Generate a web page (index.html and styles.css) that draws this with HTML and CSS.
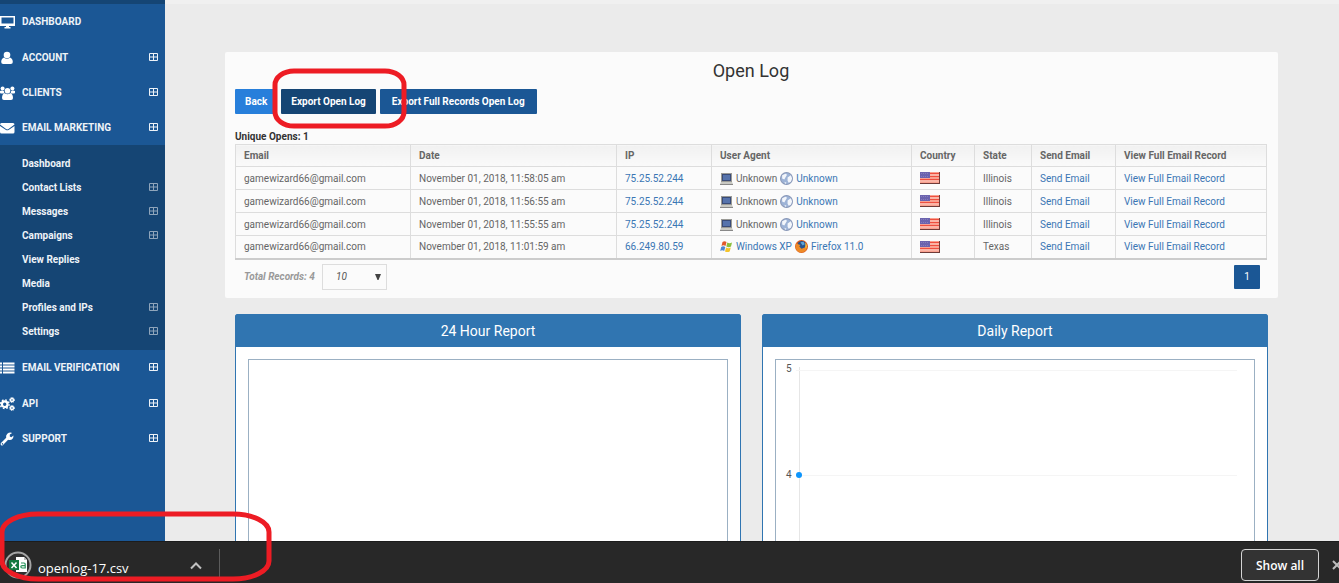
FILE: index.html
```html
<!DOCTYPE html>
<html lang="en">
<head>
<meta charset="utf-8">
<title>Open Log</title>
<link rel="stylesheet" href="styles.css">
</head>
<body>
<svg class="defs" aria-hidden="true">
  <defs>
    <symbol id="plus" viewBox="0 0 9 9"><path d="M.5.5h8v7h-8zM4.500 1v6M1 4h7" fill="none" stroke="currentColor"/></symbol>
    <symbol id="laptop" viewBox="0 0 13 13"><path d="M1 1h11v9H1z" fill="#9a9a96"/><path d="M2 2h9v7H2z" fill="#3a4c78"/><path d="M3 3h7v5H3z" fill="#5673ac"/><path d="M1 10h11l1 2H0z" fill="#c9c9c3"/><path d="M0 12h13v1H0z" fill="#888"/></symbol>
    <symbol id="globe" viewBox="0 0 12 12"><circle cx="6" cy="6" r="5.500" fill="#9db3d6" stroke="#8b99b8"/><path d="M2 3l3-1.500 1.500 1L5 5 4 7 2 6zM7 5l3-2 1.200 3L10 9 8 10 7 8zM4 9l2 1-1 1z" fill="#f3f6fb"/></symbol>
    <symbol id="windows" viewBox="0 0 13 12"><path d="M2.500 1.500Q4.500.2 6.500 1.500L5.500 5.500Q3.500 4.200 1.500 5.500z" fill="#e2592a"/><path d="M7.300 2Q9.500 3.300 12 2L11 6Q9 7.300 6.300 6z" fill="#8cbf3e"/><path d="M1.200 6.400Q3.200 5.200 5.300 6.500L4.200 10.500Q2.200 9.200.2 10.500z" fill="#4f86d2"/><path d="M6.100 7Q8.500 8.300 10.800 7L9.700 11Q7.500 12.200 5 11z" fill="#f4c42c"/></symbol>
    <symbol id="firefox" viewBox="0 0 12 12"><circle cx="6" cy="6" r="6" fill="#d9581c"/><circle cx="6.300" cy="5" r="4" fill="#27548f"/><path d="M5 2l3-.5L9 4 7 5z" fill="#5fa4d8"/><path d="M1 3l2 1 2 .5-1 1.500 2 2 3-1 2-3Q12 10 7 11.500 1 12 .5 6z" fill="#ee8a27"/><path d="M9.500 2Q12 5 10 8l-.5-2z" fill="#f8c33c"/></symbol>
    <symbol id="flag" viewBox="0 0 20 12"><path d="M0 0h20v12H0z" fill="#f9a08f"/><path d="M0 1.500h20M0 4.500h20M0 7.500h20" stroke="#ee4f40"/><path d="M0 3h20M0 9h20" stroke="#fcc9bd"/><path d="M0 0h10v6H0z" fill="#6b63ae"/><path d="M1 1.500h8M1 4.500h8" stroke="#857dbd" stroke-dasharray="1 1"/><path d="M0 11.500h20M19.500 0v12" stroke="#6f3b38"/></symbol>
  </defs>
</svg>
<div class="app">
  <div class="page">
    <nav class="sidebar">
      <ul class="menu">
        <li class="group-end"><a href="#"><svg class="menu-icon" viewBox="0 0 15 14"><path fill-rule="evenodd" d="M0 1h15v10H9v1h1.500v1.500h-6V12H6v-1H0zm1.500 1.500v6h12v-6z"/></svg><span>DASHBOARD</span></a></li>
        <li><a href="#"><svg class="menu-icon" viewBox="0 0 15 14"><circle cx="7" cy="4" r="3.300"/><path d="M4 6.500q3 2.500 6 0 2.800 1 2.800 4.500 0 2-2 2H3.200q-2 0-2-2 0-3.500 2.800-4.500z"/></svg><span>ACCOUNT</span><svg class="plus"><use href="#plus"/></svg></a></li>
        <li><a href="#"><svg class="menu-icon" viewBox="0 0 15 14"><circle cx="2.600" cy="2.500" r="2"/><circle cx="12.400" cy="2.500" r="2"/><path d="M0 5q2.300-1 4 .2Q3.800 7 5 7.500H1Q0 7.500 0 6.500zM15 5q-2.300-1-4 .2Q11.200 7 10 7.500h4q1 0 1-1z"/><circle cx="7.500" cy="4.800" r="2.800"/><path d="M4.800 7.200q2.700 2 5.400 0Q13 8 13 12q0 2-2 2H4q-2 0-2-2 0-4 2.800-4.800z"/></svg><span>CLIENTS</span><svg class="plus"><use href="#plus"/></svg></a></li>
        <li><a href="#"><svg class="menu-icon" viewBox="0 0 15 14"><path d="M0 3.500Q0 2 1.500 2H13q1.500 0 1.500 1.500L8.500 8q-1.200.8-2.400 0zM0 5l6 4q1.300.7 2.600 0l5.900-4v6q0 1.500-1.500 1.500H1.500Q0 12.500 0 11z"/></svg><span>EMAIL MARKETING</span><svg class="plus"><use href="#plus"/></svg></a>
          <ul class="submenu">
            <li><a href="#"><span>Dashboard</span></a></li>
            <li><a href="#"><span>Contact Lists</span><svg class="plus"><use href="#plus"/></svg></a></li>
            <li><a href="#"><span>Messages</span><svg class="plus"><use href="#plus"/></svg></a></li>
            <li><a href="#"><span>Campaigns</span><svg class="plus"><use href="#plus"/></svg></a></li>
            <li><a href="#"><span>View Replies</span></a></li>
            <li><a href="#"><span>Media</span></a></li>
            <li><a href="#"><span>Profiles and IPs</span><svg class="plus"><use href="#plus"/></svg></a></li>
            <li><a href="#"><span>Settings</span><svg class="plus"><use href="#plus"/></svg></a></li>
          </ul>
        </li>
        <li class="group-end"><a href="#"><svg class="menu-icon" viewBox="0 0 15 14"><path d="M0 1.500h2v2H0zm3 0h11.500v2H3zm-3 3h2v2H0zm3 0h11.500v2H3zm-3 3h2v2H0zm3 0h11.500v2H3zm-3 3h2v2H0zm3 0h11.500v2H3z"/></svg><span>EMAIL VERIFICATION</span><svg class="plus"><use href="#plus"/></svg></a></li>
        <li><a href="#"><svg class="menu-icon" viewBox="0 0 15 14"><g fill="none" stroke="currentColor"><circle cx="4.700" cy="7.200" r="2.800" stroke-width="2.200"/><circle cx="4.700" cy="7.200" r="4.400" stroke-width="1.400" stroke-dasharray="1.700 1.750"/><circle cx="12" cy="3" r="1.500" stroke-width="1.400"/><circle cx="12" cy="3" r="2.500" stroke-dasharray="1 1"/><circle cx="12" cy="11" r="1.500" stroke-width="1.400"/><circle cx="12" cy="11" r="2.500" stroke-dasharray="1 1"/></g></svg><span>API</span><svg class="plus"><use href="#plus"/></svg></a></li>
        <li><a href="#"><svg class="menu-icon" viewBox="0 0 15 14"><path fill-rule="evenodd" d="M13.500 3.600Q13.500 8 9.700 8q-.9 0-1.600-.3L3 12.900q-1 1-2 0t0-2l5.200-5.100Q5.500 3.500 7.300 1.700 9.500 0 12.200.9L9.800 2.600v1.800l1.500.9zM2 11.300q-.6.6 0 1.100t1-.1-.1-1-.9 0z"/></svg><span>SUPPORT</span><svg class="plus"><use href="#plus"/></svg></a></li>
      </ul>
    </nav>
    <main class="main">
      <section class="card">
        <h1>Open Log</h1>
        <div class="actions">
          <button class="btn btn-light">Back</button>
          <button class="btn btn-dark">Export Open Log</button>
          <button class="btn btn-wide">Export Full Records Open Log</button>
          <svg class="mark mark-export" aria-hidden="true"><rect x="3" y="3" width="129" height="55" rx="19" ry="14"/></svg>
        </div>
        <p class="unique">Unique Opens: 1</p>
        <table class="log">
          <colgroup><col class="c-email"><col class="c-date"><col class="c-ip"><col class="c-agent"><col class="c-country"><col class="c-state"><col class="c-send"><col class="c-view"></colgroup>
          <thead><tr><th>Email</th><th>Date</th><th>IP</th><th>User Agent</th><th>Country</th><th>State</th><th>Send Email</th><th>View Full Email Record</th></tr></thead>
          <tbody>
            <tr><td>gamewizard66@gmail.com</td><td>November 01, 2018, 11:58:05 am</td><td><a href="#">75.25.52.244</a></td><td><div class="agent"><svg><use href="#laptop"/></svg><span>Unknown</span><svg><use href="#globe"/></svg><a href="#">Unknown</a></div></td><td><svg class="flag"><use href="#flag"/></svg></td><td>Illinois</td><td><a href="#">Send Email</a></td><td><a href="#">View Full Email Record</a></td></tr>
            <tr><td>gamewizard66@gmail.com</td><td>November 01, 2018, 11:56:55 am</td><td><a href="#">75.25.52.244</a></td><td><div class="agent"><svg><use href="#laptop"/></svg><span>Unknown</span><svg><use href="#globe"/></svg><a href="#">Unknown</a></div></td><td><svg class="flag"><use href="#flag"/></svg></td><td>Illinois</td><td><a href="#">Send Email</a></td><td><a href="#">View Full Email Record</a></td></tr>
            <tr><td>gamewizard66@gmail.com</td><td>November 01, 2018, 11:55:55 am</td><td><a href="#">75.25.52.244</a></td><td><div class="agent"><svg><use href="#laptop"/></svg><span>Unknown</span><svg><use href="#globe"/></svg><a href="#">Unknown</a></div></td><td><svg class="flag"><use href="#flag"/></svg></td><td>Illinois</td><td><a href="#">Send Email</a></td><td><a href="#">View Full Email Record</a></td></tr>
            <tr><td>gamewizard66@gmail.com</td><td>November 01, 2018, 11:01:59 am</td><td><a href="#">66.249.80.59</a></td><td><div class="agent"><svg><use href="#windows"/></svg><a href="#">Windows XP</a><svg><use href="#firefox"/></svg><a href="#">Firefox 11.0</a></div></td><td><svg class="flag"><use href="#flag"/></svg></td><td>Texas</td><td><a href="#">Send Email</a></td><td><a href="#">View Full Email Record</a></td></tr>
          </tbody>
        </table>
        <div class="pager">
          <label for="size">Total Records: 4</label>
          <div class="select"><select id="size"><option>10</option></select><svg viewBox="0 0 6 6"><path d="M0 0h6L3.500 6h-1z"/></svg></div>
          <button class="page-btn">1</button>
        </div>
      </section>
      <div class="reports">
        <section class="report"><h2>24 Hour Report</h2><div class="plot"></div></section>
        <section class="report"><h2>Daily Report</h2><div class="plot">
          <svg class="chart"><path d="M23.500 7v400" class="axis"/><line x1="20" x2="100%" y1="10.500" y2="10.500"/><line x1="20" x2="100%" y1="115.500" y2="115.500"/><text x="10" y="12">5</text><text x="10" y="118">4</text><circle cx="23" cy="115" r="3"/></svg>
        </div></section>
      </div>
    </main>
  </div>
  <footer class="downloads">
    <div class="file">
      <svg class="file-icon" viewBox="0 0 28 28"><circle cx="14" cy="14" r="12.500" fill="#303030" stroke="#a6a6a6" stroke-width="2"/><path d="M12 6h8l3 3v12H12z" fill="#fff"/><path d="M20 6v3h3" fill="#bbb"/><path d="M5 9h10v10H5z" fill="#12793f"/><path d="M7.500 11.500l5 5.500m0-5.500l-5 5.500" stroke="#fff" stroke-width="1.500"/><path d="M17 12h3q1.200 0 1.200 1.200V17h-3q-1.400 0-1.400-1.200t1.400-1.200h2.500" fill="none" stroke="#27945a" stroke-width="1.200"/></svg>
      <span>openlog-17.csv</span>
      <button class="expand" aria-label="File options"><svg viewBox="0 0 12 8"><path d="M1 6.500l5-5 5 5" fill="none" stroke="#c0c0c0" stroke-width="2"/></svg></button>
    </div>
    <button class="show-all">Show all</button>
    <button class="close" aria-label="Close"><svg viewBox="0 0 10 10"><path d="M1 1l8 8m0-8L1 9" fill="none" stroke="#bdbdbd" stroke-width="2"/></svg></button>
    <svg class="mark mark-file" aria-hidden="true"><rect x="3" y="3" width="267" height="65" rx="36" ry="18"/></svg>
  </footer>
</div>
</body>
</html>
```
FILE: styles.css
```css
* { box-sizing: border-box; }
body { margin: 0; font-family: Roboto, "Liberation Sans", sans-serif; font-size: 10px; color: #666; }
a { color: #3a76b4; text-decoration: none; }
button { font: inherit; border: 0; padding: 0; }
.defs { position: absolute; width: 0; height: 0; }
.app { display: flex; flex-direction: column; height: 100vh; overflow: hidden; }
.page { display: flex; flex: 1; min-height: 0; overflow: hidden; }

.sidebar { width: 165px; flex: none; background: #1b5795; border-top: 4px solid #154574; }
.menu, .submenu { list-style: none; margin: 0; padding: 0; }
.menu a { display: flex; align-items: center; height: 35px; padding-right: 7px; color: #eef3f8; font-weight: 700; }
.menu .group-end { margin-bottom: 1px; }
.menu-icon { width: 15px; height: 14px; margin-right: 7px; fill: currentColor; color: #fff; }
.plus { width: 9px; height: 9px; margin-left: auto; }
.submenu { background: #154574; padding: 6px 0 7px; }
.submenu a { height: 24px; padding-left: 22px; }
.submenu .plus { color: #8fa5bb; }

.main { flex: 1; min-width: 0; background: #ebebeb; border-top: 4px solid #f0f0f0; padding: 48px 61px 0 60px; }
.card { background: #fbfbfb; border-radius: 2px; padding: 7px 11px 5px 10px; }
h1 { margin: 0; font-size: 18px; line-height: 24px; font-weight: 400; text-align: center; color: #333; }
.actions { position: relative; display: flex; gap: 4px; margin-top: 6px; }
.btn { height: 25px; padding: 0 10px; background: #1b5795; color: #fff; font-weight: 700; border-radius: 1px; }
.btn-light { background: #277fdb; }
.btn-dark { background: #154574; }
.btn-wide { padding: 0 12px; }
.mark { position: absolute; fill: none; stroke: #ed1c24; stroke-width: 5px; pointer-events: none; }
.mark-export { left: 37px; top: -21px; width: 136px; height: 62px; }
.unique { margin: 16px 0 0; line-height: 14px; font-weight: 700; color: #333; }

.log { width: 100%; table-layout: fixed; border-collapse: collapse; border-bottom: 2px solid #ccc; }
.log th, .log td { border: 1px solid #ddd; padding: 0 8px; height: 23px; text-align: left; white-space: nowrap; }
.log th { height: 22px; background: linear-gradient(#f1f1f1, #fafafa); }
.c-email { width: 17%; }
.c-date { width: 20%; }
.c-ip { width: 95px; }
.c-agent { width: 200px; }
.c-country { width: 63px; }
.c-state { width: 57px; }
.c-send { width: 84px; }
.c-view { width: 151px; }
.agent { display: flex; align-items: center; gap: 3px; }
.agent svg { width: 13px; height: 13px; }
.flag { display: block; width: 20px; height: 12px; }
.pager { display: flex; align-items: center; height: 32px; margin-top: 1px; padding: 0 7px 0 9px; }
.pager label { min-width: 76px; font-weight: 700; font-style: italic; color: #999; }
.select { position: relative; margin-left: 2px; }
.select select { display: block; appearance: none; width: 65px; height: 26px; padding: 0 13px; border: 1px solid #ddd; border-radius: 0; background: #fbfbfb; font: italic 10px Roboto, sans-serif; color: #555; }
.select svg { position: absolute; right: 6px; top: 10px; width: 6px; height: 6px; fill: #444; pointer-events: none; }
.page-btn { width: 26px; height: 24px; margin-left: auto; background: #1b5795; color: #fff; border-radius: 1px; }

.reports { display: grid; grid-template-columns: 1fr 1fr; gap: 21px; padding: 16px 10px 0; }
.report { background: #fff; border: 1px solid #3075b1; border-radius: 2px; height: 400px; }
h2 { margin: 0; background: #3075b1; color: #fff; font-size: 14px; font-weight: 400; line-height: 32px; text-align: center; }
.plot { height: 340px; margin: 12px; border: 1px solid #9bb0c3; padding-right: 17px; }
.chart { display: block; width: 100%; height: 100%; }
.chart line { stroke: #f5f5f5; }
.chart .axis { stroke: #e6e6e6; }
.chart text { font-size: 10px; fill: #555; }
.chart circle { fill: #0d95fc; }

.downloads { position: relative; display: flex; flex: none; height: 42px; background: #282828; border-top: 1px solid #1c1c1c; padding: 7px 0 0 4px; color: #fff; font-family: "Open Sans", "Noto Sans", sans-serif; }
.file { display: flex; align-items: center; width: 216px; height: 30px; border-right: 1px solid #5c5c5c; font-size: 13px; }
.file-icon { width: 28px; height: 28px; margin-top: 2px; margin-right: 6px; }
.file span { margin-top: 8px; }
.expand { margin-left: auto; margin-right: 17px; width: 12px; height: 30px; background: none; }
.expand svg { display: block; width: 12px; height: 8px; margin-top: 4px; }
.show-all { margin-left: auto; width: 78px; height: 32px; border: 1px solid #d4d4d4; border-radius: 4px; background: #333; color: #fff; font-size: 12px; font-weight: 600; }
.close { flex: none; width: 10px; margin-left: 13px; margin-right: -3px; height: 32px; background: none; }
.close svg { display: block; width: 10px; height: 10px; }
.mark-file { left: -1px; top: -31px; width: 274px; height: 72px; }
```
